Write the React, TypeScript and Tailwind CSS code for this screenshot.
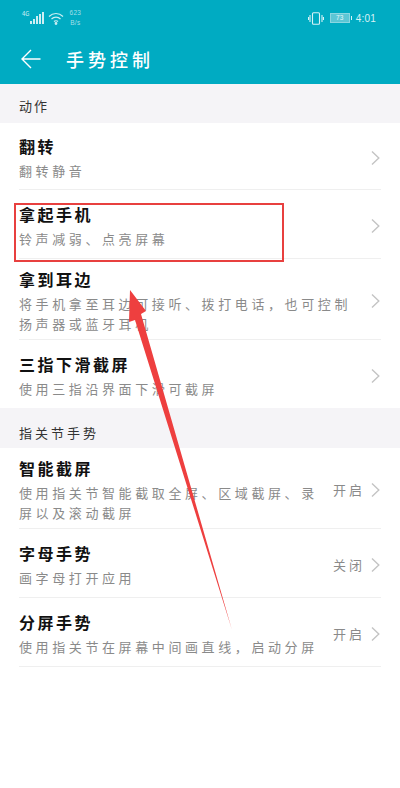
const FONT = "font-['Noto_Sans_CJK_SC',sans-serif]";

function Chevron() {
  return (
    <svg width="9" height="16" viewBox="0 0 9 16" fill="none" className="shrink-0">
      <path d="M1 1.5 L7.8 8 L1 14.5" stroke="#c4c4c4" strokeWidth="1.4" />
    </svg>
  );
}

function Row({ title, sub, status, h, last }: { title: string; sub: string[]; status?: string; h: string; last?: boolean }) {
  return (
    <div className={`mx-[19px] pt-[3px] flex items-center ${h} ${last ? "" : "border-b border-[#efefef]"}`}>
      <div className="flex-1 min-w-0">
        <div className="text-[16px] leading-[24px] tracking-[2.5px] font-bold text-[#111] mb-[3px]">{title}</div>
        {sub.map((s) => (
          <div key={s} className="text-[13px] leading-[20px] tracking-[3.6px] text-[#8a8a8a] whitespace-nowrap">{s}</div>
        ))}
      </div>
      {status && <span className="text-[13px] tracking-[3px] text-[#8a8a8a] mr-[6px]">{status}</span>}
      <Chevron />
      <div className="w-[1px] shrink-0" />
    </div>
  );
}

export default function App() {
  return (
    <div className={`w-[400px] h-[788px] bg-white relative overflow-hidden ${FONT}`}>
      <div className="h-[84px] bg-[#00abc2] text-white">
        <div className="h-[34px] flex items-center pl-[22px] pr-[24px] pt-[2px]">
          <span className="text-[6px] leading-none -mt-[8px] text-[#cdeef3]">4G</span>
          <svg width="15" height="12" viewBox="0 0 15 12" className="ml-[1px]" fill="#cdeef3">
            <rect x="0" y="9" width="2" height="3" />
            <rect x="3" y="7" width="2" height="5" />
            <rect x="6" y="4" width="2" height="8" />
            <rect x="9" y="2" width="2" height="10" />
            <rect x="12" y="0" width="2" height="12" />
          </svg>
          <svg width="16" height="13" viewBox="0 0 16 13" className="ml-[3px]" fill="none" stroke="#cdeef3" strokeWidth="1.2">
            <path d="M1 4.5 C5 0.5 11 0.5 15 4.5" />
            <path d="M3.5 7 C6 4.5 10 4.5 12.5 7" />
            <path d="M6 9.5 C7 8.5 9 8.5 10 9.5" />
            <circle cx="8" cy="11.5" r="0.8" fill="#cdeef3" />
          </svg>
          <div className="ml-[5px] text-[6.5px] leading-[10px] tracking-[0.3px] text-[#a5dfe8] font-['Liberation_Sans',sans-serif] text-center">
            <div>623</div>
            <div>B/s</div>
          </div>
          <div className="flex-1" />
          <svg width="16" height="13" viewBox="0 0 16 13" fill="none" stroke="#d8f2f6" strokeWidth="1.1">
            <rect x="4.5" y="0.7" width="7" height="11.6" rx="1" />
            <path d="M2 3 V10 M0.5 5 V8 M14 3 V10 M15.5 5 V8" />
          </svg>
          <div className="ml-[6px] w-[20px] h-[10px] bg-[#5cc6d5] border border-[#8ad6e1] text-[6.5px] leading-[8px] text-center text-[#e6f7f9] font-['Liberation_Sans',sans-serif]">73</div>
          <div className="w-[1px] h-[4px] bg-[#d8f2f6] ml-[1px]" />
          <span className="ml-[4px] text-[10px] tracking-[0.2px] text-[#d8f2f6] font-['Liberation_Sans',sans-serif]">4:01</span>
        </div>
        <div className="h-[50px] flex items-center pl-[21px]">
          <svg width="20" height="20" viewBox="0 0 20 20" fill="none" stroke="white" strokeWidth="1.4">
            <path d="M19.5 10 H1 M10 1 L1 10 L10 19" />
          </svg>
          <span className="ml-[25px] text-[18px] tracking-[4px] font-medium">手势控制</span>
        </div>
      </div>

      <div className="h-[39px] bg-[#f5f4f7] flex items-center pl-[19px] pt-[5px] text-[13px] tracking-[2px] text-[#333]">动作</div>
      <Row h="h-[67px]" title="翻转" sub={["翻转静音"]} />
      <Row h="h-[69px]" title="拿起手机" sub={["铃声减弱、点亮屏幕"]} />
      <Row h="h-[81px]" title="拿到耳边" sub={["将手机拿至耳边可接听、拨打电话，也可控制", "扬声器或蓝牙耳机"]} />
      <Row h="h-[68px]" title="三指下滑截屏" sub={["使用三指沿界面下滑可截屏"]} last />

      <div className="h-[40px] bg-[#f5f4f7] flex items-center pl-[19px] pt-[10px] text-[13px] tracking-[3px] text-[#333]">指关节手势</div>
      <Row h="h-[81px]" title="智能截屏" sub={["使用指关节智能截取全屏、区域截屏、录", "屏以及滚动截屏"]} status="开启" />
      <Row h="h-[69px]" title="字母手势" sub={["画字母打开应用"]} status="关闭" />
      <Row h="h-[69px]" title="分屏手势" sub={["使用指关节在屏幕中间画直线，启动分屏"]} status="开启" />

      <div className="absolute left-[14px] top-[203px] w-[270px] h-[59px] border-[2px] border-[#e8403f]" />
      <svg className="absolute left-0 top-0 pointer-events-none" width="400" height="788" viewBox="0 0 400 788">
        <path d="M130 290 L146 311 L141 314 L232 630 L135 320 L129 322 Z" fill="#ee3f3f" />
      </svg>
    </div>
  );
}
